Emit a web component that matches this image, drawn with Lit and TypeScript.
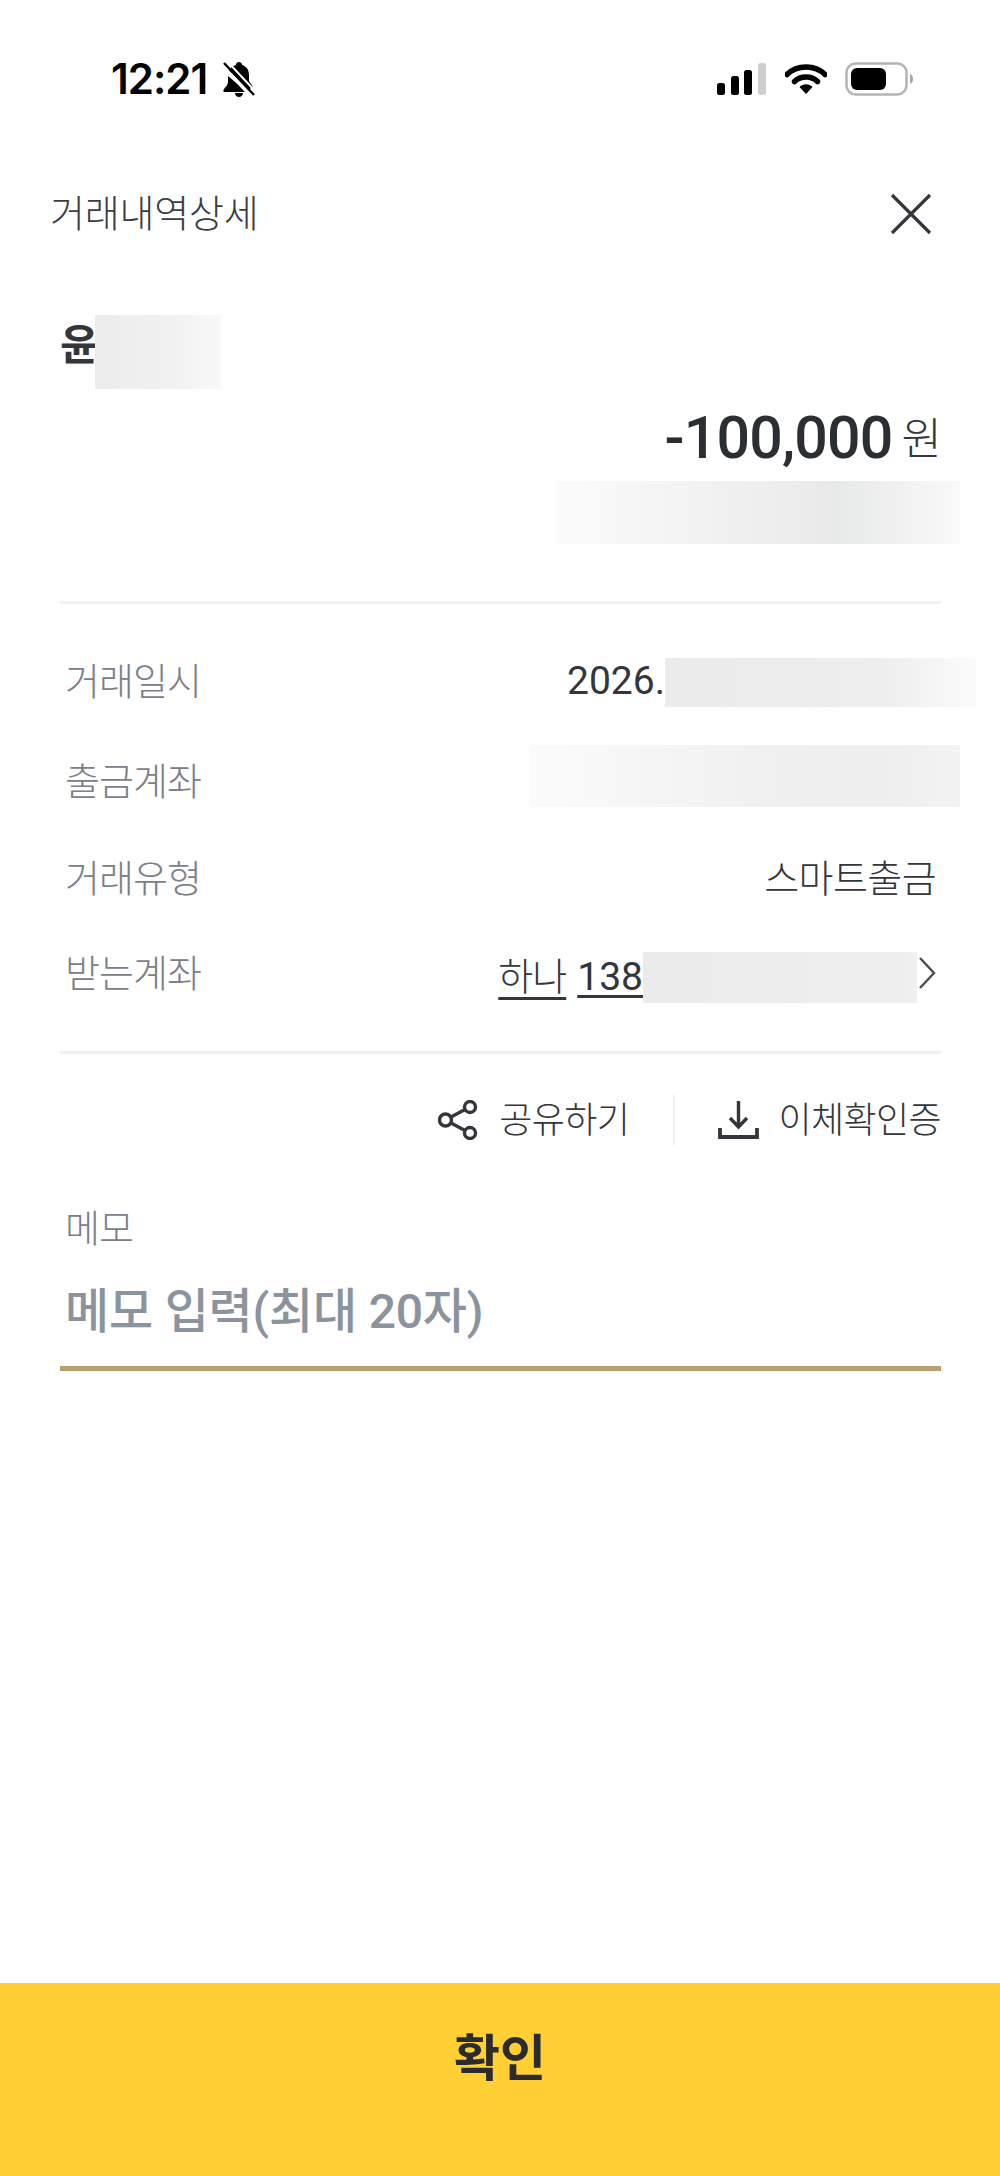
import { LitElement, html, css } from "lit";
import { customElement } from "lit/decorators.js";

@customElement("app-root")
export class AppRoot extends LitElement {
  static styles = css`
    :host {
      display: flex; flex-direction: column; width: 1000px; height: 2176px; background: #fff;
      font-family: Roboto, "Noto Sans CJK KR", sans-serif; color: #33363b; overflow: hidden;
    }
    .status { height: 158px; flex: none; display: flex; align-items: center; padding: 0 87px 0 111px; box-sizing: border-box; }
    .time { font: 600 42px/1 Inter, sans-serif; color: #000; letter-spacing: -1px; }
    .bell { margin-left: 15px; }
    .status-right { margin-left: auto; display: flex; align-items: center; gap: 18px; }
    .wifi { margin-left: 1px; }
    .title-row { height: 110px; flex: none; display: flex; align-items: center; justify-content: space-between; padding: 0 68px 0 50px; }
    .title { font-size: 38px; font-weight: 300; letter-spacing: -0.2px; color: #3a3d42; padding-bottom: 6px; }
    .close { margin-top: 2px; }
    .name-row { margin: 47px 40px 0 60px; height: 74px; display: flex; align-items: center; }
    .name { font-size: 42px; font-weight: 700; width: 35px; white-space: nowrap; padding-bottom: 22px; }
    .amount-row { margin-right: 58px; height: 92px; display: flex; justify-content: flex-end; align-items: center; padding-top: 4px; box-sizing: border-box; }
    .amount { font-size: 59px; font-weight: 500; letter-spacing: -0.8px; color: #2b2e33; }
    .won { font-size: 44px; font-weight: 300; margin-left: 9px; padding-bottom: 2px; }
    .blur-wrap { display: flex; justify-content: flex-end; margin-right: 40px; }
    .b { flex: none; }
    .b-name { width: 126px; height: 74px; background: linear-gradient(90deg, #ececec, #f1f1f1 60%, #f8f8f8); }
    .b-ref { width: 404px; height: 63px; background: linear-gradient(90deg, #fbfbfb, #ececec 60%, #e8e9e9 70%, #f9f9f9); }
    .b-date { width: 311px; height: 49px; margin: 3px -40px 0 0; background: linear-gradient(90deg, #ebebeb, #eeeeee 70%, #fbfbfb); }
    .b-from { width: 431px; height: 62px; margin: 0 -24px 10px 0; background: linear-gradient(90deg, #fbfbfb, #f1f1f1 50%, #eeeeee 80%, #f3f3f3); }
    .b-to { width: 274px; height: 51px; margin-top: 9px; background: linear-gradient(90deg, #ebebeb, #efefef); }
    .hr { height: 3px; flex: none; background: #f1f1f1; margin: 0 59px 0 60px; }
    .hr.top { margin-top: 57px; margin-bottom: 27px; }
    .hr.bottom { background: #eef1f4; margin-top: 30px; }
    .row { display: flex; align-items: center; justify-content: space-between; margin: 0 64px 0 65px; font-size: 38px; }
    .r1 { height: 100px; }
    .r2 { height: 100px; }
    .r3 { height: 94px; }
    .r4 { height: 96px; }
    .label { color: #7b8088; font-weight: 300; letter-spacing: -1px; padding-bottom: 6px; }
    .value { display: flex; align-items: center; font-weight: 300; letter-spacing: -0.6px; color: #33363b; }
    .ko { padding-bottom: 6px; }
    .digits { font-size: 39px; font-weight: 400; letter-spacing: 0; }
    .link { display: flex; align-items: baseline; gap: 11px; }
    .u { text-decoration: underline; text-underline-offset: 5px; }
    .u-ko { letter-spacing: -1px; text-underline-offset: 7px; }
    .chev { margin-left: 1px; }
    .actions { height: 132px; flex: none; display: flex; align-items: center; justify-content: flex-end; margin-right: 59px; font-size: 36px; font-weight: 300; letter-spacing: -0.6px; }
    .action { display: flex; align-items: center; gap: 21px; }
    .action.tight { gap: 19px; }
    .action span { padding-bottom: 6px; }
    .sep { width: 2px; height: 50px; background: #eef1f1; margin: 0 43px 0 44px; }
    .field { margin: 0 59px 0 60px; border-bottom: 5px solid #b89f6e; padding: 0 0 0 5px; }
    .memo-label { font-size: 38px; font-weight: 300; color: #7b8088; letter-spacing: -1px; line-height: 50px; margin-top: 18px; }
    .memo-input { font-size: 48px; font-weight: 500; color: #8b949e; line-height: 56px; padding: 30px 0 26px; letter-spacing: -0.2px; }
    .confirm { margin-top: auto; height: 193px; box-sizing: border-box; padding-bottom: 52px; flex: none; background: #ffcf33; display: flex; align-items: center; justify-content: center; font-size: 50px; font-weight: 700; color: #2b2b2b; }
  `;

  render() {
    return html`
      <div class="status">
        <span class="time">12:21</span>
        <svg class="bell" width="34" height="36" viewBox="0 0 34 36">
          <path fill="#000" d="M17 1c2 0 3 1.500 3.200 3 4.300 1.300 6.800 5 6.800 10v5c0 2.500 3 4 4 7.500l-4 1.500L7 9.500C8 7 10.500 5 13.800 4 14 2.500 15 1 17 1zM6 15l19 16H2.500c-1 0-1.500-.800-1-2 1.500-3 4.500-4.500 4.500-8.500V15zM13 32h8c0 2.500-2 4-4 4s-4-1.500-4-4z"/>
          <path stroke="#000" stroke-width="2.400" d="M2 2l30 32"/>
          <path stroke="#fff" stroke-width="2" d="M0 5l28 30M5 0l28 30"/>
        </svg>
        <div class="status-right">
          <svg width="49" height="32" viewBox="0 0 49 32">
            <rect x="0" y="20" width="8" height="12" rx="2.500" fill="#000"/>
            <rect x="14" y="13" width="8" height="19" rx="2.500" fill="#000"/>
            <rect x="27" y="7" width="8" height="25" rx="2.500" fill="#000"/>
            <rect x="41" y="0" width="8" height="32" rx="2.500" fill="#cfcfcf"/>
          </svg>
          <svg class="wifi" width="42" height="30" viewBox="0 0 42 30">
            <path d="M2 10.500C7 5.500 13.500 3 21 3s14 2.500 19 7.500" fill="none" stroke="#000" stroke-width="5.500" stroke-linecap="round"/>
            <path d="M9.500 17.500C12.500 14.500 16.500 13 21 13s8.500 1.500 11.500 4.500" fill="none" stroke="#000" stroke-width="5.500" stroke-linecap="round"/>
            <path d="M14.500 23c1.800-1.800 4-2.700 6.500-2.700s4.700.900 6.500 2.700L21 30z" fill="#000"/>
          </svg>
          <svg width="68" height="34" viewBox="0 0 68 34">
            <rect x="1.500" y="1.500" width="60" height="31" rx="9" fill="#fff" stroke="#b4b4b4" stroke-width="2.500"/>
            <rect x="6" y="6" width="35" height="22" rx="6" fill="#000"/>
            <path d="M65 12c2 .500 3 2.500 3 5s-1 4.500-3 5z" fill="#a8a8a8"/>
          </svg>
        </div>
      </div>

      <div class="title-row">
        <span class="title">거래내역상세</span>
        <svg class="close" width="42" height="42" viewBox="0 0 42 42"><path d="M2 2l38 38M40 2L2 40" stroke="#33363b" stroke-width="3.200" fill="none"/></svg>
      </div>

      <div class="name-row"><span class="name">윤</span><div class="b b-name"></div></div>
      <div class="amount-row"><span class="amount">-100,000</span><span class="won">원</span></div>
      <div class="blur-wrap"><div class="b b-ref"></div></div>
      <div class="hr top"></div>

      <div class="row r1"><span class="label">거래일시</span><span class="value"><span class="digits">2026.</span><div class="b b-date"></div></span></div>
      <div class="row r2"><span class="label">출금계좌</span><span class="value"><div class="b b-from"></div></span></div>
      <div class="row r3"><span class="label">거래유형</span><span class="value ko">스마트출금</span></div>
      <div class="row r4"><span class="label">받는계좌</span>
        <span class="value">
          <span class="link"><span class="u u-ko">하나</span><span class="u digits">138</span></span>
          <div class="b b-to"></div>
          <svg class="chev" width="18" height="32" viewBox="0 0 18 32"><path d="M2 1l14 15L2 31" fill="none" stroke="#4a4d52" stroke-width="2.400"/></svg>
        </span>
      </div>
      <div class="hr bottom"></div>

      <div class="actions">
        <div class="action">
          <svg width="40" height="40" viewBox="0 0 40 40" fill="none" stroke="#33363b" stroke-width="3.400">
            <circle cx="7.500" cy="20" r="6"/><circle cx="32" cy="7" r="5.500"/><circle cx="32" cy="33" r="5.500"/>
            <path d="M13 17L27 9.500M13 23L27 30.500"/>
          </svg>
          <span>공유하기</span>
        </div>
        <div class="sep"></div>
        <div class="action tight">
          <svg width="41" height="38" viewBox="0 0 41 38" fill="none" stroke="#33363b" stroke-width="3.400">
            <path d="M20.500 0v26M12 17l8.500 9 8.500-9"/>
            <path d="M2 27v9h37v-9" stroke-width="3.800"/>
          </svg>
          <span>이체확인증</span>
        </div>
      </div>

      <div class="field">
        <div class="memo-label">메모</div>
        <div class="memo-input">메모 입력(최대 20자)</div>
      </div>

      <div class="confirm">확인</div>
    `;
  }
}
